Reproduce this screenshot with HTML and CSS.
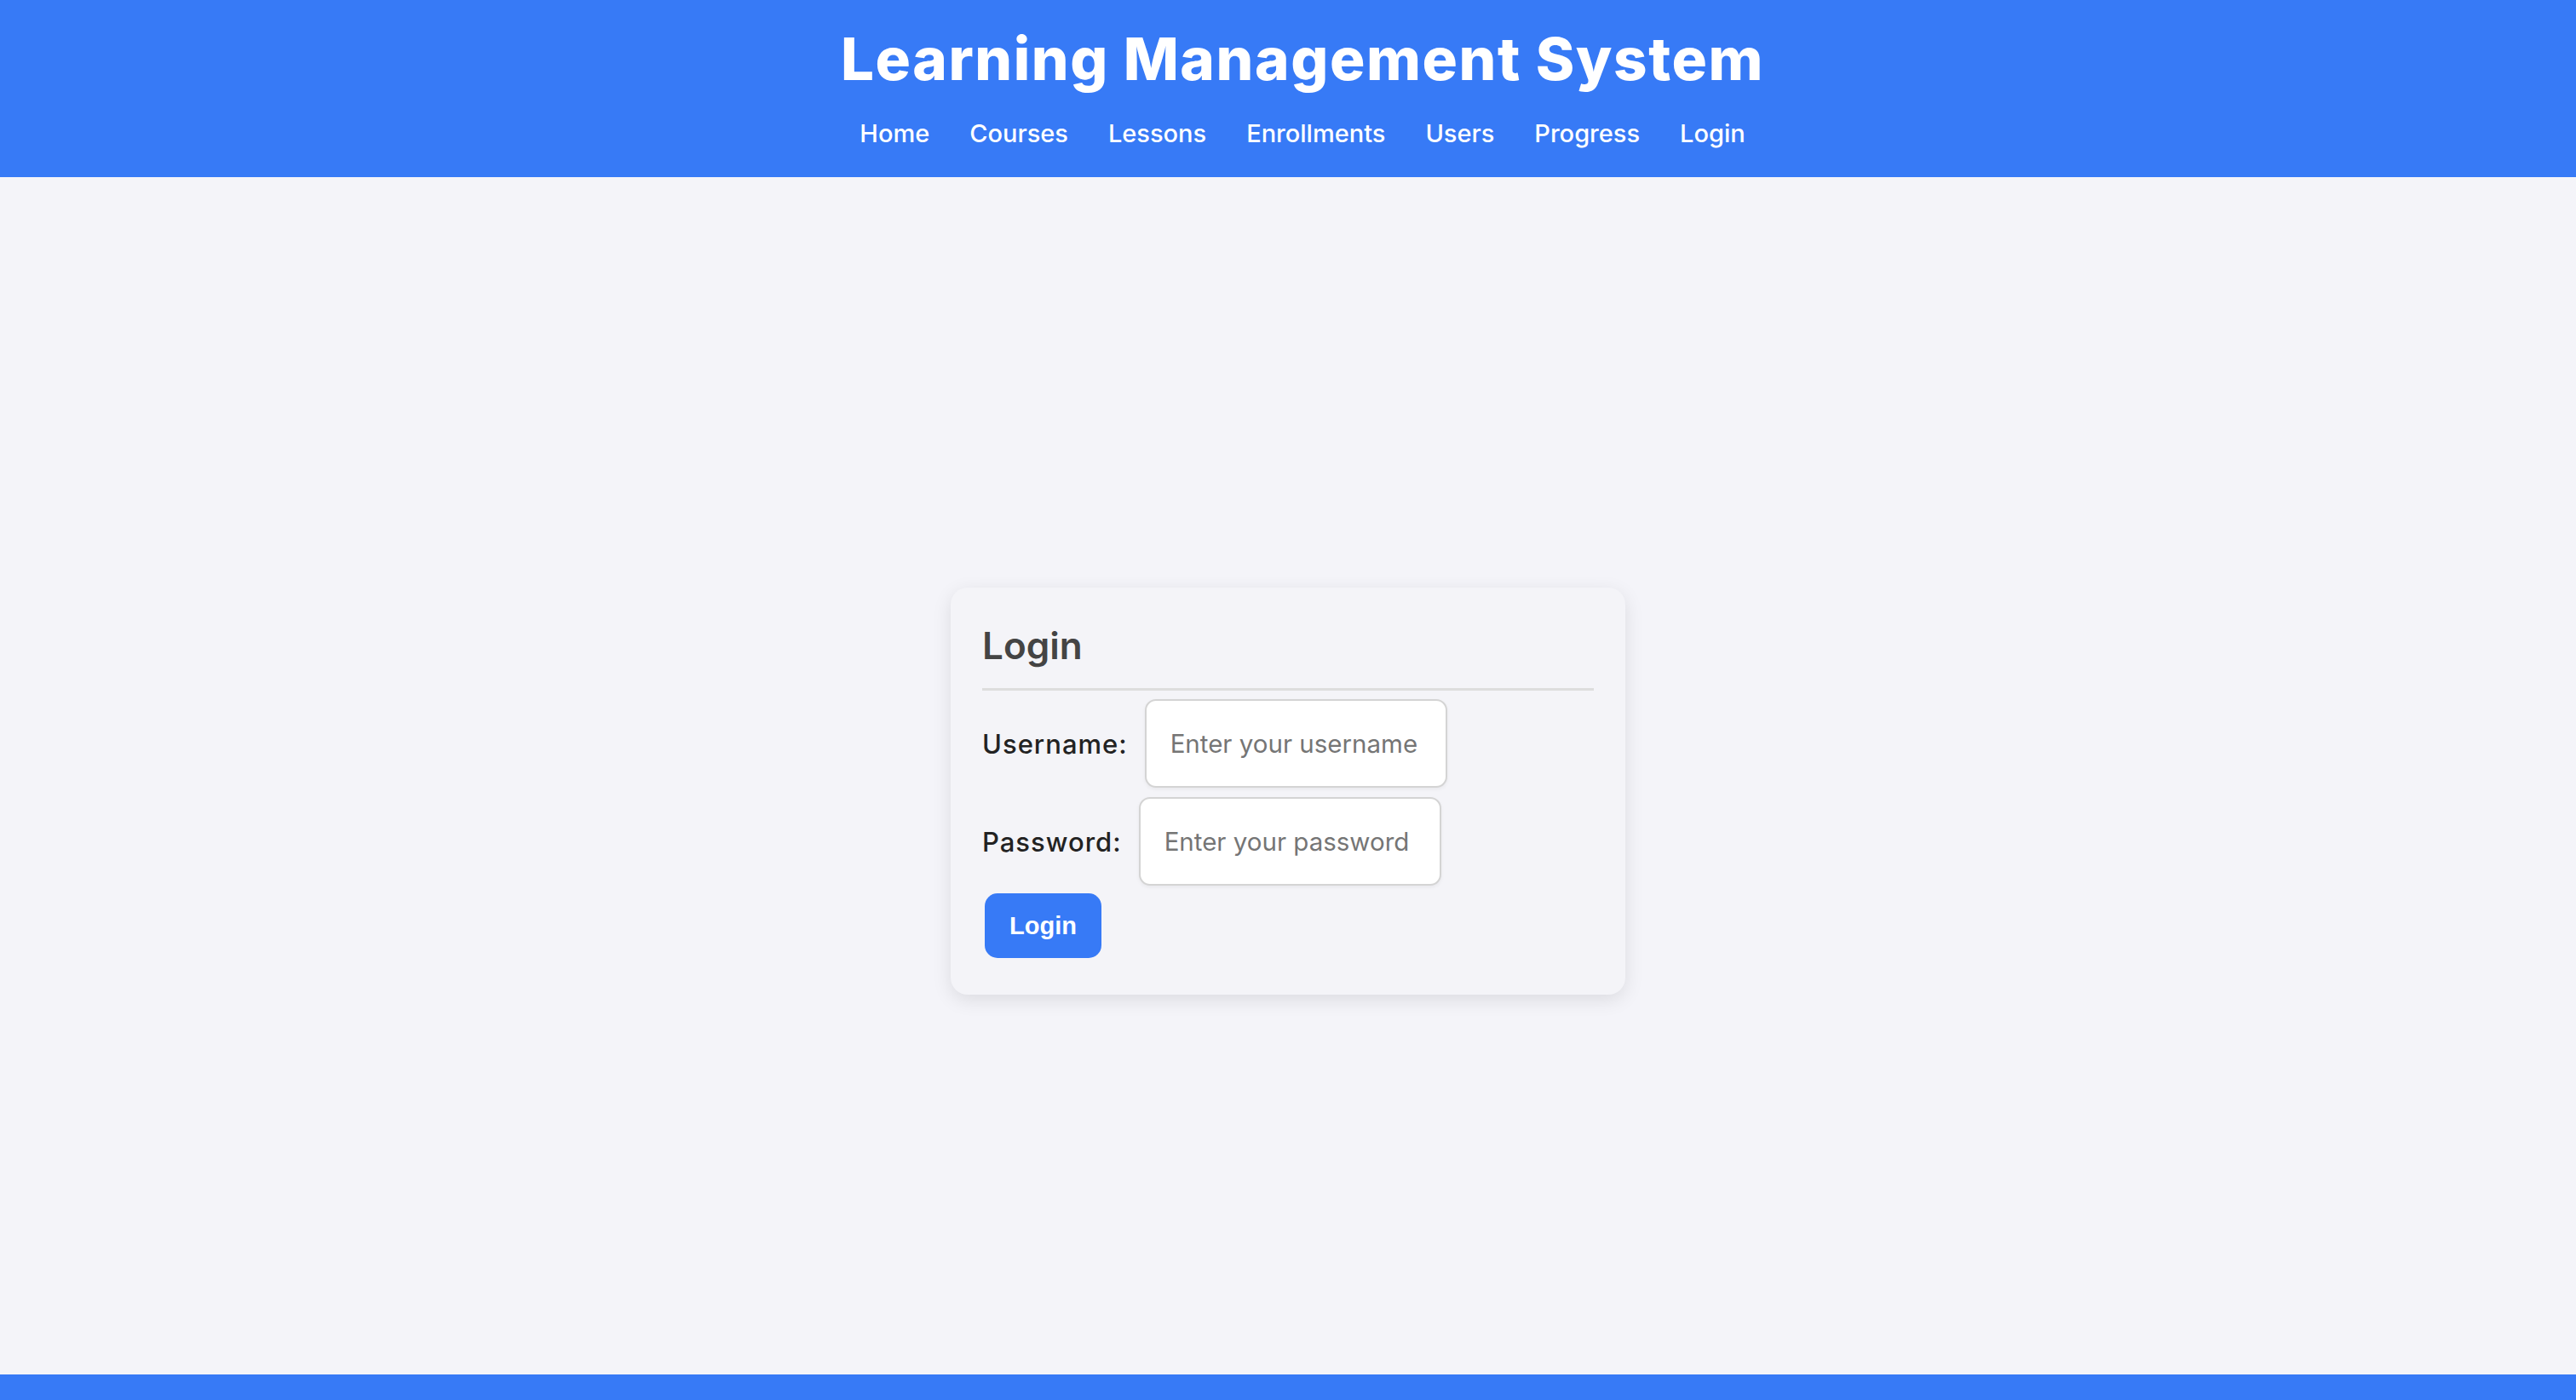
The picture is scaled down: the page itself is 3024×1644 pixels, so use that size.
FILE: index.html
```html
<!DOCTYPE html>
<html lang="en">
<head>
<meta charset="utf-8">
<title>Learning Management System</title>
<link rel="stylesheet" href="styles.css">
</head>
<body>
<header class="site-header">
  <h1 class="site-title">Learning Management System</h1>
  <nav class="site-nav">
    <a href="#">Home</a>
    <a href="#">Courses</a>
    <a href="#">Lessons</a>
    <a href="#">Enrollments</a>
    <a href="#">Users</a>
    <a href="#">Progress</a>
    <a href="#">Login</a>
  </nav>
</header>
<main class="content">
  <section class="card">
    <h2 class="card-title">Login</h2>
    <form class="login-form">
      <div class="form-row">
        <label for="username">Username:</label>
        <input id="username" type="text" placeholder="Enter your username">
      </div>
      <div class="form-row">
        <label for="password">Password:</label>
        <input id="password" type="password" placeholder="Enter your password">
      </div>
      <button type="submit" class="btn">Login</button>
    </form>
  </section>
</main>
<footer class="site-footer"></footer>
</body>
</html>
```

FILE: styles.css
```css
* { box-sizing: border-box; }

html, body { height: 100%; }

body {
  margin: 0;
  min-height: 100vh;
  display: flex;
  flex-direction: column;
  background: #f4f4f9;
  font-family: "Inter", "Open Sans", sans-serif;
  color: #333;
}

.site-header {
  background: #377af6;
  color: #fff;
  height: 208px;
  padding: 35px 0 0 34px;
  text-align: center;
}

.site-title {
  margin: 0 0 39px;
  font-size: 69px;
  line-height: 68px;
  font-weight: 800;
  letter-spacing: 1.6px;
}

.site-nav {
  display: flex;
  justify-content: center;
  gap: 47px;
}

.site-nav a {
  color: #fff;
  text-decoration: none;
  font-size: 29px;
  line-height: 29px;
  font-weight: 500;
}

.content {
  flex: 1;
  display: flex;
  align-items: center;
  justify-content: center;
  padding-top: 36px;
}

.card {
  width: 792px;
  background: #f4f4f8;
  border-radius: 20px;
  padding: 37px 37px 43px;
  box-shadow: 0 6px 22px rgba(0, 0, 0, 0.1);
}

.card-title {
  margin: 9px 0 10px;
  padding-bottom: 28px;
  border-bottom: 3px solid #dddddd;
  font-size: 44px;
  line-height: 44px;
  font-weight: 600;
  color: #444;
}

.form-row {
  display: flex;
  align-items: center;
  gap: 20px;
  margin-bottom: 11px;
}

.form-row label {
  font-size: 31px;
  font-weight: 500;
  letter-spacing: 1px;
  color: #222;
}

.form-row input {
  width: 355px;
  height: 104px;
  padding: 0 16px 0 28px;
  border: 2px solid #d4d4d4;
  border-radius: 13px;
  background: #fff;
  font-family: inherit;
  font-size: 29.5px;
  color: #333;
  box-shadow: 0 2px 4px rgba(0, 0, 0, 0.05);
}

.form-row input::placeholder {
  color: #757575;
}

.btn {
  margin: -2px 0 0 3px;
  height: 76px;
  padding: 0 29px;
  border: none;
  border-radius: 15px;
  background: #377af6;
  color: #fff;
  font-family: "Liberation Sans", Arial, sans-serif;
  font-size: 29px;
  font-weight: 700;
}

.site-footer {
  height: 30px;
  background: #377af6;
}
```
